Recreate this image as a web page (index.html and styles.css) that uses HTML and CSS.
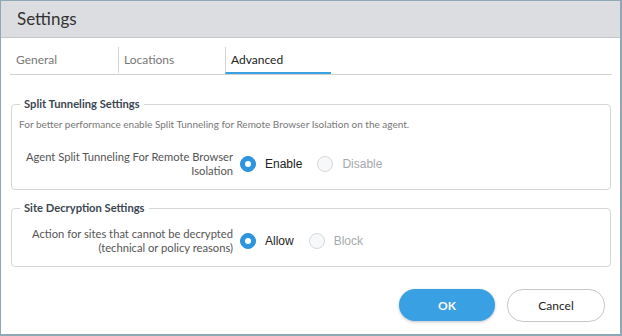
FILE: index.html
```html
<!DOCTYPE html>
<html lang="en">
<head>
    <meta charset="UTF-8">
    <meta name="viewport" content="width=device-width, initial-scale=1.0">
    <title>Settings</title>
    <link rel="stylesheet" href="styles.css">
</head>
<body>

    <div class="dialog">
        <div class="dialog-header">Settings</div>

        <div class="tabs">
            <div class="tab">General</div>
            <div class="tab">Locations</div>
            <div class="tab active">Advanced</div>
        </div>

        <fieldset class="group first">
            <legend>Split Tunneling Settings</legend>
            <p class="desc">For better performance enable Split Tunneling for Remote Browser Isolation on the agent.</p>
            <div class="row">
                <div class="row-label">Agent Split Tunneling For Remote Browser<br>Isolation</div>
                <div class="radio checked"></div><span class="radio-text">Enable</span>
                <div class="radio"></div><span class="radio-text off">Disable</span>
            </div>
        </fieldset>

        <fieldset class="group second">
            <legend>Site Decryption Settings</legend>
            <div class="row">
                <div class="row-label">Action for sites that cannot be decrypted<br>(technical or policy reasons)</div>
                <div class="radio checked"></div><span class="radio-text">Allow</span>
                <div class="radio"></div><span class="radio-text off">Block</span>
            </div>
        </fieldset>

        <div class="footer">
            <button class="btn-ok">OK</button>
            <button class="btn-cancel">Cancel</button>
        </div>
    </div>

</body>
</html>
```

FILE: styles.css
```css
/* settings dialog */
:root {
    --blue: #3aa0e4; --line: #d4d6d8; --frame: #8ea8b5;
    --text: #333; --muted: #777;
}
body { margin: 0; background: #fff; font-family: 'Lato', sans-serif; color: var(--text); }
.dialog { width: 622px; height: 336px; box-sizing: border-box; border: solid var(--frame); border-width: 1px 2px 2px 1px; background: #fff; }
.dialog-header { height: 36px; background: #dcdde0; border-bottom: 1px solid #c4c6c9; font-size: 17px; line-height: 36px; padding-left: 16px; color: #333; }

.tabs { display: flex; margin: 9px 8px 0 9px; border-bottom: 1px solid #d0d0d0; }
.tab { width: 101px; padding: 5px 0 5px 5px; line-height: 15px; font-size: 12px; color: var(--muted); border-bottom: 2px solid transparent; border-left: 1px solid #d4d4d4; }
.tab:first-child { border-left: none; width: 102px; padding-left: 6px; }
.tab.active { color: #222; border-bottom-color: var(--blue); width: 100px; }

.group { margin: 0 9px 0 10px; padding: 8px 7px 11px 7px; border: 1px solid var(--line); border-radius: 4px; }
.group.first { margin-top: 23px; }
.group.second { margin-top: 12px; padding-top: 13px; padding-bottom: 11px; }
legend { font-size: 11.2px; font-weight: bold; line-height: 12px; padding: 0 4px; margin-left: 1px; color: #3b4650; }
.desc { margin: 0; font-size: 10px; line-height: 12px; color: var(--muted); }
.first .row { margin-top: 20px; }

.row { display: flex; align-items: center; }
.row-label { width: 214px; text-align: right; font-size: 11.2px; line-height: 14px; color: #555; margin-right: 7px; }
.radio { width: 16px; height: 16px; box-sizing: border-box; border-radius: 50%; border: 1px solid #d6d8da; background: #f7f8f9; display: flex; align-items: center; justify-content: center; }
.radio.checked { background: #2e96e0; border-color: #2a8fd6; }
.radio.checked::after { content: ''; width: 6px; height: 6px; border-radius: 50%; background: #fff; }
.radio-text { font-family: 'Liberation Sans', Arial, sans-serif; font-size: 12px; color: #222; margin: 0 15px 0 9px; }
.radio-text.off { color: #a6a9ac; }

.footer { display: flex; justify-content: flex-end; gap: 12px; margin-top: 22px; padding-right: 15px; }
button { height: 32px; border-radius: 16px; cursor: pointer; font-family: 'Lato', sans-serif; font-size: 12px; }
.btn-ok { width: 96px; background: var(--blue); color: #fff; border: none; font-weight: bold; box-shadow: 0 1px 3px rgba(0,0,0,0.25); }
.btn-cancel { width: 98px; height: 33px; background: #fff; color: #222; border: 1px solid #c8c8c8; }
```
